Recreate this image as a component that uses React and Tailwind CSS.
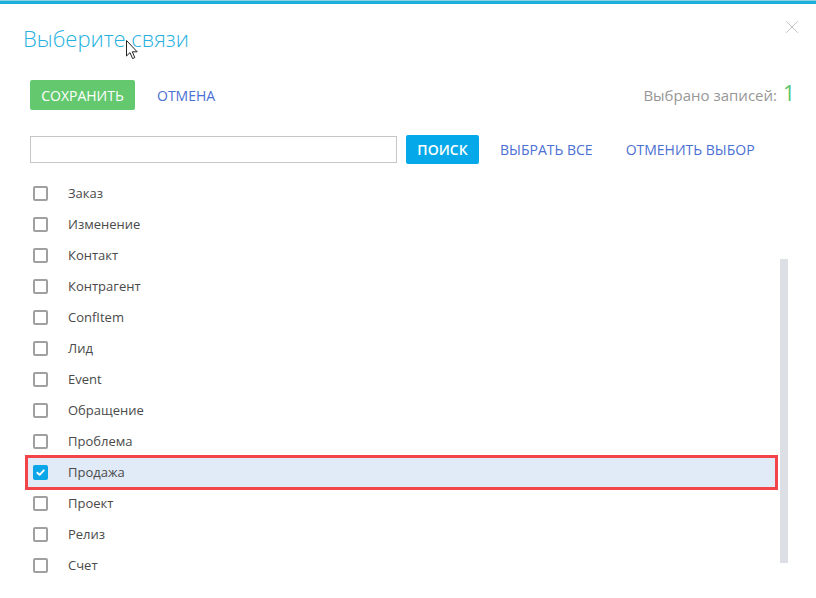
import { X } from 'lucide-react';

const items = [
  'Заказ', 'Изменение', 'Контакт', 'Контрагент', 'ConfItem', 'Лид', 'Event',
  'Обращение', 'Проблема', 'Продажа', 'Проект', 'Релиз', 'Счет',
];

const Checkbox = ({ checked }) => (
  checked ? (
    <span className="flex items-center justify-center w-[15px] h-[15px] rounded-[2px] bg-[#0ba6e8]">
      <svg width="11" height="11" viewBox="0 0 12 12" fill="none">
        <path d="M2.5 6.3 L5 8.6 L9.6 3.6" stroke="#fff" strokeWidth="2" strokeLinecap="round" strokeLinejoin="round" />
      </svg>
    </span>
  ) : (
    <span className="block w-[15px] h-[15px] rounded-[2px] border-2 border-[#a0a0a0] bg-white" />
  )
);

const Cursor = () => (
  <svg className="absolute left-[126px] top-[40px]" width="13" height="20" viewBox="0 0 13 20">
    <path d="M0.5 0.5 L0.5 16 L4 12.6 L6.6 18.6 L8.8 17.6 L6.3 11.8 L11.2 11.8 Z" fill="#fff" stroke="#222" strokeWidth="1" strokeLinejoin="round" />
  </svg>
);

const App = () => {
  const selected = 'Продажа';

  return (
    <div className="relative w-[816px] h-[598px] overflow-hidden bg-white text-[#444] font-['Open_Sans',_'Liberation_Sans',_sans-serif]">
      <div className="h-px bg-[#8fcfe4]" />
      <div className="h-[3px] bg-[#1bb0da]" />

      {/* Header */}
      <div className="flex items-start justify-between pl-[23px] pr-[13px] mt-[19px]">
        <h1 className="text-[22px] leading-[30px] font-light text-[#27b1e0]">Выберите связи</h1>
        <X size={22} strokeWidth={0.9} className="text-[#b5b5b5] -mt-[7px]" />
      </div>
      <Cursor />

      {/* Actions */}
      <div className="flex items-center justify-between pl-[30px] pr-[21px] mt-[27px]">
        <div className="flex items-center">
          <button className="h-[30px] w-[105px] rounded-[2px] bg-[#64c96e] text-white text-[14px]">СОХРАНИТЬ</button>
          <button className="ml-[22px] text-[14px] text-[#4b6fd2]">ОТМЕНА</button>
        </div>
        <div className="flex items-baseline">
          <span className="text-[15px] text-[#979797]">Выбрано записей:</span>
          <span className="ml-[6px] text-[21px] leading-none text-[#56c46a]">1</span>
        </div>
      </div>

      {/* Search */}
      <div className="flex items-center pl-[30px] mt-[25px]">
        <input className="h-[27px] w-[367px] border border-[#c6c6c6] bg-white outline-none px-2 text-[13px]" />
        <button className="ml-[9px] h-[29px] w-[73px] rounded-[2px] bg-[#05a9e9] text-white text-[14px] font-semibold">ПОИСК</button>
        <button className="ml-[21px] text-[14px] text-[#4b6fd2]">ВЫБРАТЬ ВСЕ</button>
        <button className="ml-[33px] text-[14px] text-[#4b6fd2]">ОТМЕНИТЬ ВЫБОР</button>
      </div>

      {/* List */}
      <div className="flex mt-[14px] pl-[25px]">
        <div className="w-[753px]">
          {items.map((name) => {
            const isSel = name === selected;
            return (
              <div key={name} className={`relative flex items-center h-[31px] pl-[8px] ${isSel ? 'bg-[#e1eaf7]' : ''}`}>
                <Checkbox checked={isSel} />
                <span className="ml-[20px] text-[13px] text-[#4a4a4a]">{name}</span>
                {isSel && <span className="absolute left-0 right-0 -top-[2px] -bottom-[2px] border-[3px] border-[#f3444a]" />}
              </div>
            );
          })}
        </div>
        <div className="ml-[2px] mt-[81px] w-[8px] h-[304px] bg-[#dcdfe3]" />
      </div>
    </div>
  );
};

export default App;
